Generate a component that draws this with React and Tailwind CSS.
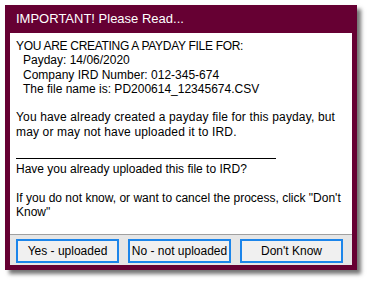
import React from 'react'

function Btn({ children }) {
  return (
    <button
      type="button"
      className="h-[24px] w-[103px] border-2 border-[#1c85ea] bg-[#f0f0f0] text-[12px] text-black"
    >
      {children}
    </button>
  )
}

export default function App() {
  return (
    <div className="h-[282px] w-[368px] bg-white pl-[5px] pt-[5px] font-['Liberation_Sans',Arial,sans-serif]">
      <div className="flex h-[265px] w-[352px] flex-col bg-[#660033] px-[5px] pb-[5px] shadow-[4px_4px_4px_rgba(0,0,0,0.55)]">
        <div className="flex h-[28px] items-center pl-[6px] text-[13px] text-white">IMPORTANT! Please Read...</div>
        <div className="flex-1 bg-white pl-[6px] pr-[6px] pt-[6px] text-[12px] leading-[14.3px] text-black">
          <p className="tracking-[-0.3px]">YOU ARE CREATING A PAYDAY FILE FOR:</p>
          <p className="pl-[7px]">Payday: 14/06/2020</p>
          <p className="pl-[7px]">Company IRD Number: 012-345-674</p>
          <p className="pl-[7px]">The file name is: PD200614_12345674.CSV</p>
          <p className="mt-[14.3px] tracking-[0.15px]">
            You have already created a payday file for this payday, but may or may not have uploaded it to IRD.
          </p>
          <div className="mb-[3px] mt-[19px] h-px w-[260px] bg-black" />
          <p>Have you already uploaded this file to IRD?</p>
          <p className="mt-[14.3px]">If you do not know, or want to cancel the process, click "Don't Know"</p>
        </div>
        <div className="flex h-[31px] gap-[9px] border-t border-[#a0a0a0] bg-[#e6e6e6] pl-[6px] pt-[4px]">
          <Btn>Yes - uploaded</Btn>
          <Btn>No - not uploaded</Btn>
          <Btn>Don't Know</Btn>
        </div>
      </div>
    </div>
  )
}
